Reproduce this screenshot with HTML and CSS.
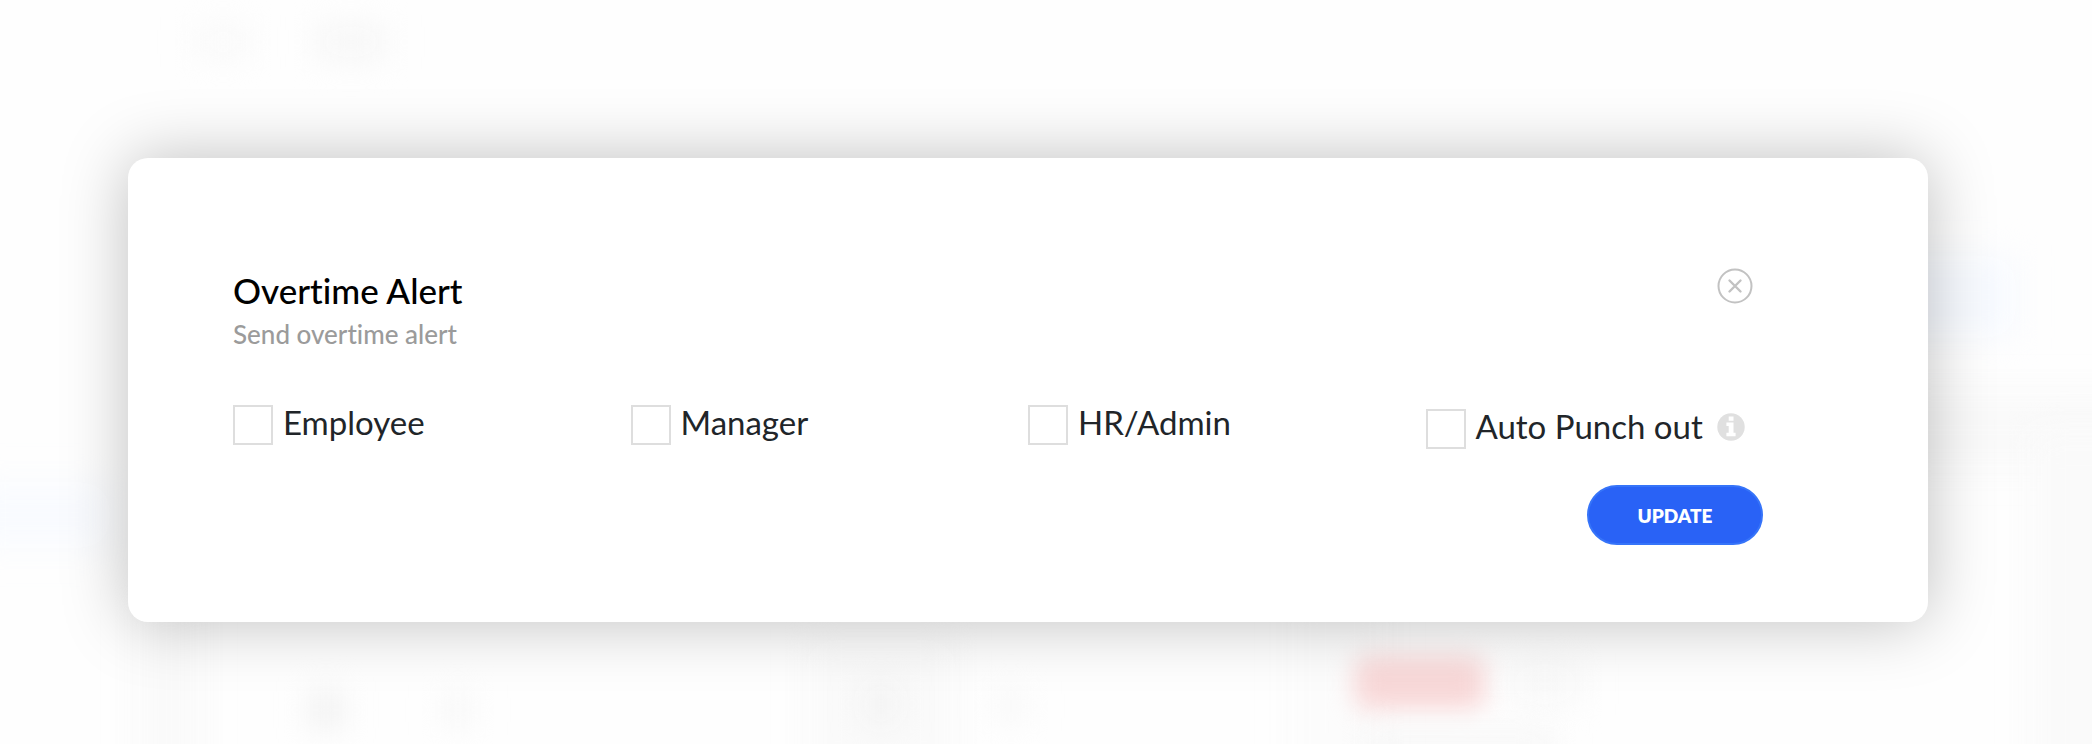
FILE: index.html
```html
<!DOCTYPE html>
<html lang="en">
<head>
    <meta charset="UTF-8">
    <meta name="viewport" content="width=device-width, initial-scale=1.0">
    <title>Overtime Alert</title>
    <link rel="stylesheet" href="styles.css">
</head>
<body>
    <div class="backdrop" aria-hidden="true">
        <span class="blob crumb-one"></span>
        <span class="blob crumb-two"></span>
        <span class="blob side-link"></span>
        <span class="blob top-action"></span>
        <span class="blob panel-right"></span>
        <span class="blob panel-edge"></span>
        <span class="blob strip-left"></span>
        <span class="blob strip-middle"></span>
        <span class="blob strip-right"></span>
        <span class="blob dot-one"></span>
        <span class="blob dot-two"></span>
        <span class="blob dot-three"></span>
        <span class="blob dot-four"></span>
        <span class="blob tag-red"></span>
        <span class="blob tag-text"></span>
        <span class="blob tag-note"></span>
    </div>

    <div class="modal" role="dialog" aria-labelledby="modalTitle">
        <div class="modal-header">
            <div>
                <h2 id="modalTitle">Overtime Alert</h2>
                <p>Send overtime alert</p>
            </div>
            <button type="button" class="close" aria-label="Close">
                <svg width="36" height="36" viewBox="0 0 36 36" fill="none" stroke="#c2c2c2" stroke-width="2">
                    <circle cx="18" cy="18" r="16.5"/>
                    <path d="M12.5 12.5l11 11M23.5 12.5l-11 11" stroke-width="2.4" stroke-linecap="round"/>
                </svg>
            </button>
        </div>

        <form id="alertForm">
            <div class="options">
                <div class="option">
                    <input type="checkbox" id="employee">
                    <label for="employee">Employee</label>
                </div>
                <div class="option">
                    <input type="checkbox" id="manager">
                    <label for="manager">Manager</label>
                </div>
                <div class="option">
                    <input type="checkbox" id="admin">
                    <label for="admin">HR/Admin</label>
                </div>
                <div class="option with-info">
                    <input type="checkbox" id="punchout">
                    <label for="punchout">Auto Punch out</label>
                    <svg class="info" width="28" height="28" viewBox="0 0 28 28">
                        <circle cx="14" cy="14" r="13.7" fill="#e0e0e0"/>
                        <path d="M11.7 3.4h4.8v4.3h-4.8zM9.4 9.6h7.1v10.2h2.1v3.4H9.4v-3.4h2.3v-6.8H9.4z" fill="#fff"/>
                    </svg>
                </div>
            </div>
            <div class="actions">
                <button type="submit" class="button">UPDATE</button>
            </div>
        </form>
    </div>
</body>
</html>
```
FILE: styles.css
```css
* {
    box-sizing: border-box;
}
body {
    margin: 0;
    padding: 158px 164px 0 128px;
    min-height: 100vh;
    background: #fefefe;
    color: #212529;
    font-family: Lato, "Open Sans", sans-serif;
    font-variant-ligatures: none;
    overflow: hidden;
}

/* Blurred page behind the modal */
.backdrop {
    position: absolute;
    inset: 0;
    overflow: hidden;
}
.blob {
    position: absolute;
    filter: blur(16px);
}
.crumb-one {
    left: 196px;
    top: 28px;
    width: 54px;
    height: 28px;
    background: #f9f9f9;
}
.crumb-two {
    left: 316px;
    top: 26px;
    width: 70px;
    height: 32px;
    background: #f6f6f6;
}
.side-link {
    left: -30px;
    top: 482px;
    width: 140px;
    height: 66px;
    background: #f9fbff;
}
.top-action {
    right: 76px;
    top: 256px;
    width: 140px;
    height: 82px;
    background: #f7faff;
}
.panel-right {
    right: -40px;
    top: 390px;
    width: 240px;
    height: 80px;
    background: #fafafa;
}
.panel-edge {
    right: -40px;
    top: 430px;
    width: 102px;
    height: 400px;
    background: #fafafa;
}
.strip-left {
    left: 136px;
    top: 600px;
    width: 66px;
    height: 200px;
    background: #fafafa;
}
.strip-middle {
    left: 806px;
    top: 640px;
    width: 150px;
    height: 140px;
    background: #fafafa;
}
.strip-right {
    left: 1290px;
    top: 600px;
    width: 100px;
    height: 200px;
    background: #fcfcfc;
}
.dot-one {
    left: 312px;
    top: 692px;
    width: 28px;
    height: 36px;
    background: #eeeeee;
}
.dot-two {
    left: 444px;
    top: 696px;
    width: 28px;
    height: 28px;
    background: #f6f6f6;
}
.dot-three {
    left: 866px;
    top: 686px;
    width: 30px;
    height: 36px;
    background: #f1f1f1;
}
.dot-four {
    left: 996px;
    top: 692px;
    width: 30px;
    height: 28px;
    background: #f7f7f7;
}
.tag-red {
    left: 1354px;
    top: 656px;
    width: 132px;
    height: 54px;
    background: #f8d8d8;
    border-radius: 16px;
    filter: blur(12px);
}
.tag-text {
    left: 1510px;
    top: 664px;
    width: 70px;
    height: 40px;
    background: #f8f8f8;
}
.tag-note {
    left: 1364px;
    top: 732px;
    width: 190px;
    height: 30px;
    background: #f6f6f6;
}

.modal {
    position: relative;
    padding: 108px 105px 77px;
    background: white;
    border-radius: 20px;
    box-shadow: 0 0 66px rgba(0, 0, 0, 0.25);
}
.modal-header {
    display: flex;
    justify-content: space-between;
    align-items: flex-start;
    padding-right: 70px;
}
h2 {
    margin: 0;
    color: black;
    font-size: 35px;
    line-height: 48px;
    font-weight: 500;
}
p {
    margin: 0;
    color: #9b9b9b;
    font-size: 26px;
    line-height: 40px;
    font-weight: 500;
}
.close {
    display: flex;
    margin-top: 2px;
    padding: 0;
    border: none;
    background: none;
    cursor: pointer;
}
.options {
    display: grid;
    grid-template-columns: repeat(4, 1fr);
    align-items: start;
    margin-top: 51px;
}
.option {
    display: flex;
    align-items: center;
    height: 40px;
    gap: 10px;
}
.with-info {
    height: 48px;
}
.option input {
    appearance: none;
    flex: none;
    width: 40px;
    height: 40px;
    margin: 0;
    border: 2px solid #dedede;
    background: white;
}
.option input:checked {
    background: #2962f6;
}
.option label {
    font-size: 33px;
    line-height: 36px;
    padding-bottom: 6px;
    white-space: nowrap;
}
.info {
    flex: none;
    margin: 0 0 4px 4px;
}
.actions {
    display: flex;
    justify-content: flex-end;
    margin-top: 32px;
    padding-right: 60px;
}
.button {
    width: 176px;
    height: 60px;
    border: 2px solid #3674f9;
    border-radius: 30px;
    background: #2962f6;
    color: white;
    font-family: inherit;
    font-size: 19px;
    font-weight: 800;
    cursor: pointer;
}
```
